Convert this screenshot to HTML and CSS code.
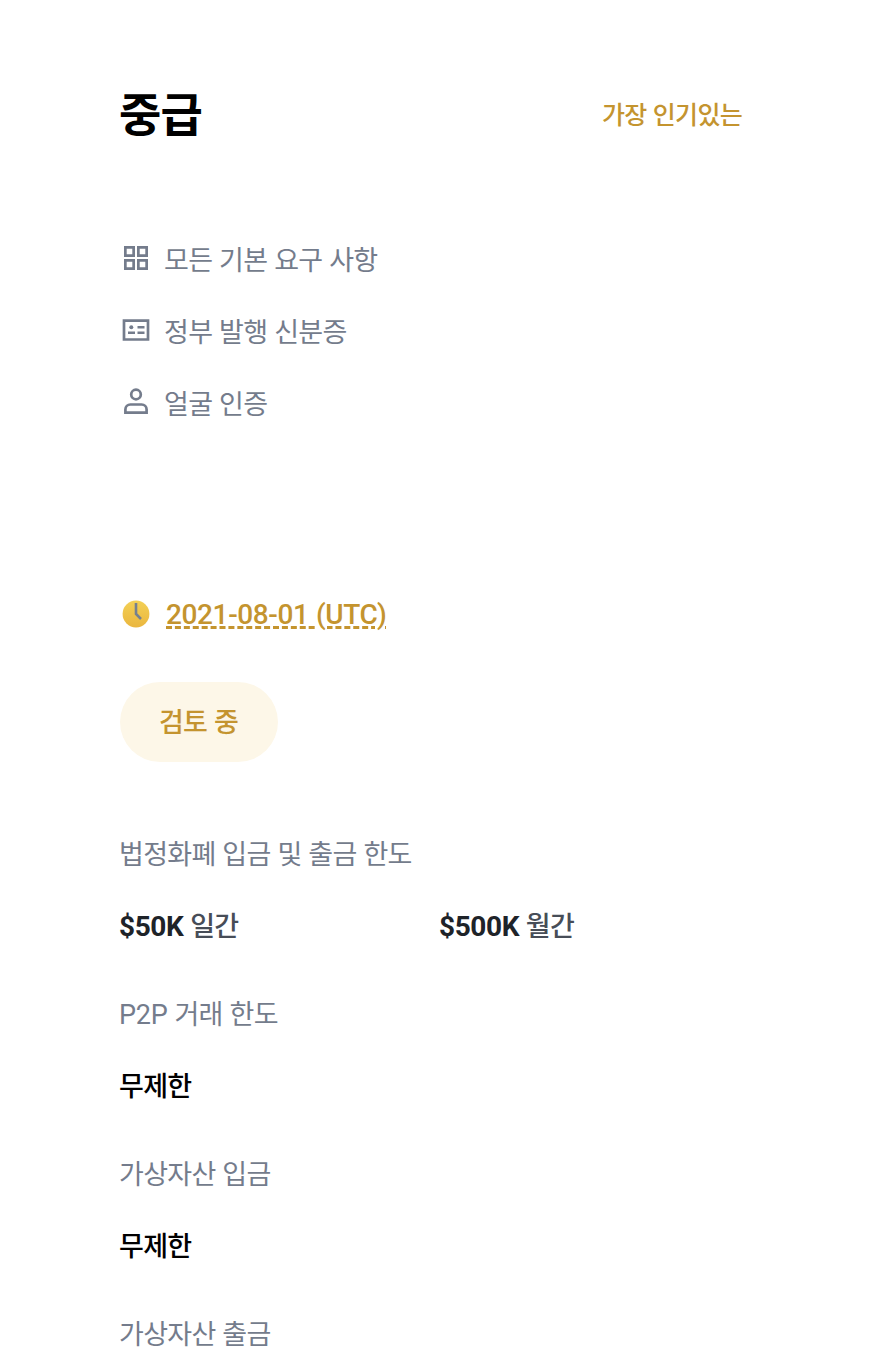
FILE: index.html
```
<!DOCTYPE html>
<html lang="ko">
<head>
    <meta charset="UTF-8">
    <title>인증 등급</title>
    <link rel="stylesheet" href="styles.css">
</head>
<body>
    <div class="card">
        <div class="header">
            <h2>중급</h2>
            <span class="tag">가장 인기있는</span>
        </div>

        <ul class="requirements">
            <li>
                <svg class="icon" viewBox="0 0 32 32" fill="none" stroke="currentColor" stroke-width="2.7">
                    <path d="M5.35 5.35h8.3v8.3h-8.3zM18.35 5.35h8.3v8.3h-8.3zM5.35 18.35h8.3v8.3h-8.3zM18.35 18.35h8.3v8.3h-8.3z"/>
                </svg>
                <span>모든 기본 요구 사항</span>
            </li>
            <li>
                <svg class="icon" viewBox="0 0 32 32" fill="none" stroke="currentColor" stroke-width="2.7">
                    <path d="M4 6.7h24v18.8H4z"/>
                    <path d="M17.5 13.3h7M8 18.7h7M17.5 18.7h7" stroke-width="2.4"/>
                    <circle cx="11.3" cy="13.2" r="2" fill="currentColor" stroke="none"/>
                </svg>
                <span>정부 발행 신분증</span>
            </li>
            <li>
                <svg class="icon" viewBox="0 0 32 32" fill="none" stroke="currentColor" stroke-width="2.7">
                    <circle cx="16" cy="8.5" r="4.8"/>
                    <path d="M5.4 26.7v-3.2a5 5 0 0 1 5-5h11.2a5 5 0 0 1 5 5v3.2z"/>
                </svg>
                <span>얼굴 인증</span>
            </li>
        </ul>

        <div class="review-date">
            <svg class="icon" viewBox="0 0 32 32">
                <defs>
                    <linearGradient id="clock" x1="0" y1="0" x2="0" y2="1">
                        <stop offset="0" stop-color="#f3d055"/>
                        <stop offset="1" stop-color="#eab63f"/>
                    </linearGradient>
                </defs>
                <circle cx="16" cy="16" r="13.4" fill="url(#clock)"/>
                <path d="M16 5v11l5 5" fill="none" stroke="#76808f" stroke-width="2.6"/>
            </svg>
            <span class="date">2021-08-01 (UTC)</span>
        </div>

        <div class="status">검토 중</div>

        <div class="limits">
            <div class="limit">
                <div class="label">법정화폐 입금 및 출금 한도</div>
                <div class="amounts">
                    <div class="amount"><b>$50K</b> 일간</div>
                    <div class="amount"><b>$500K</b> 월간</div>
                </div>
            </div>
            <div class="limit">
                <div class="label"><span class="latin">P2P</span> 거래 한도</div>
                <div class="value">무제한</div>
            </div>
            <div class="limit">
                <div class="label">가상자산 입금</div>
                <div class="value">무제한</div>
            </div>
            <div class="limit">
                <div class="label">가상자산 출금</div>
            </div>
        </div>
    </div>
</body>
</html>
```
FILE: styles.css
```
* {
    box-sizing: border-box;
    margin: 0;
    padding: 0;
}

body {
    font-family: Roboto, "Noto Sans CJK KR", sans-serif;
    font-size: 27px;
    line-height: 40px;
    letter-spacing: -0.7px;
    word-spacing: 0.8px;
    color: #474d57;
    background: white;
    height: 1362px;
    overflow: hidden;
}

.card {
    padding: 81px 144px 0 119px;
}

.header {
    display: flex;
    justify-content: space-between;
    align-items: center;
    height: 68px;
}

.header h2 {
    color: #000;
    font-size: 46px;
    font-weight: 700;
    letter-spacing: -0.8px;
}

.tag {
    padding-top: 2px;
    color: #c4942f;
    font-size: 25px;
    font-weight: 500;
}

.requirements {
    display: flex;
    flex-direction: column;
    gap: 32px;
    margin-top: 92px;
    list-style: none;
    color: #747c8c;
}

.requirements li,
.review-date {
    display: flex;
    align-items: center;
    gap: 12px;
}

.icon {
    flex: none;
    width: 32px;
    height: 32px;
    margin-left: 1px;
}

.requirements .icon {
    margin-bottom: 6px;
}

.review-date {
    height: 41px;
    margin-top: 169px;
    gap: 14px;
    color: #c4942f;
}

.review-date .icon {
    margin-bottom: 2px;
}

.date {
    padding-top: 1px;
    font-size: 28px;
    font-weight: 500;
    letter-spacing: -0.38px;
    text-decoration: underline dashed 2.5px;
    text-underline-offset: 2px;
}

.status {
    width: 158px;
    height: 80px;
    margin: 47px 0 0 1px;
    border-radius: 40px;
    padding: 1px 1px 0 0;
    line-height: 80px;
    text-align: center;
    color: #c4942f;
    background: #fdf7e8;
    font-weight: 500;
}

.limits {
    display: flex;
    flex-direction: column;
    gap: 48px;
    margin-top: 73px;
}

.label {
    height: 40px;
    color: #747c8c;
}

.latin {
    letter-spacing: -0.2px;
}

.amounts {
    display: grid;
    grid-template-columns: 320px 1fr;
    margin-top: 32px;
}

.amount {
    font-weight: 500;
}

.amount b {
    color: #1e2329;
    font-size: 28px;
    font-weight: 700;
    letter-spacing: -0.4px;
}

.value {
    height: 40px;
    margin-top: 32px;
    color: #000;
    font-weight: 500;
}
```
